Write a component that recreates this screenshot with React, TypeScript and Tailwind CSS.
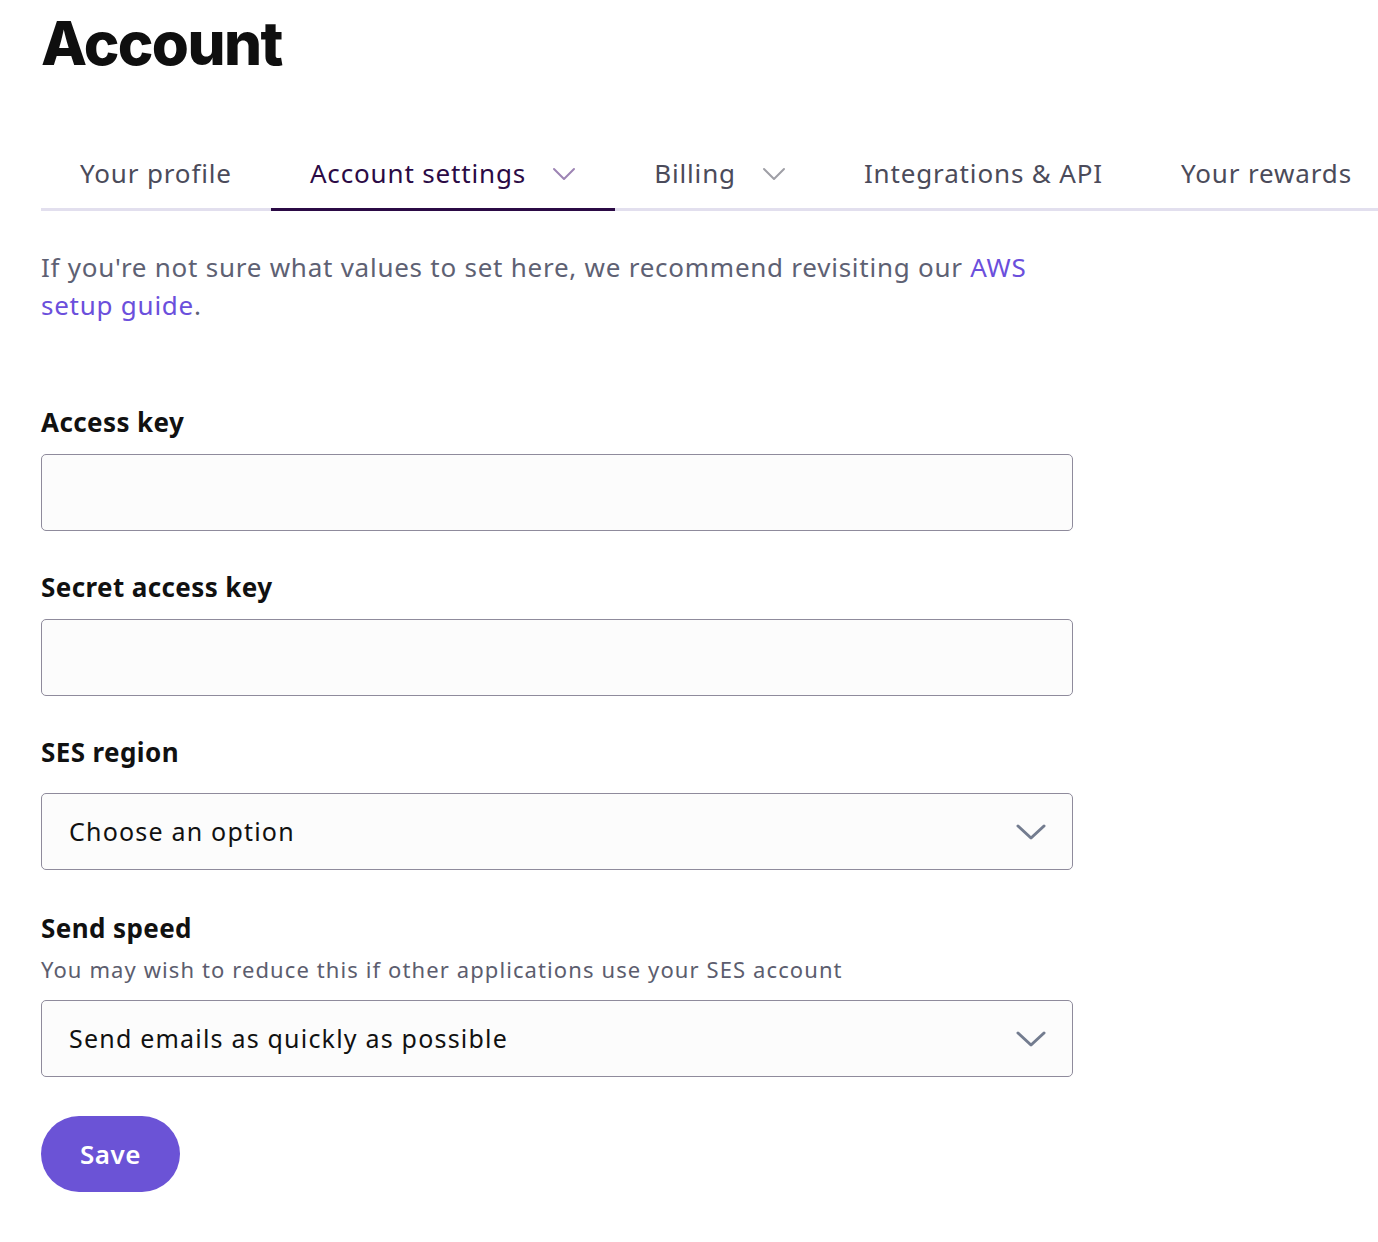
import React from "react";

const font = { fontFamily: '"Noto Sans", "Open Sans", sans-serif' };

function TabChevron({ className }: { className?: string }) {
  return (
    <svg viewBox="0 0 24 14" className={className} fill="none" stroke="currentColor" strokeWidth={2} strokeLinecap="round" strokeLinejoin="round">
      <path d="M2 2l10 10 10-10" />
    </svg>
  );
}

function SelectChevron({ className }: { className?: string }) {
  return (
    <svg viewBox="0 0 30 16" className={className} fill="none" stroke="currentColor" strokeWidth={3} strokeLinecap="round" strokeLinejoin="round">
      <path d="M2 2l13 12 13-12" />
    </svg>
  );
}

function Tab({ label, active, chevron, chevronClass }: { label: string; active?: boolean; chevron?: boolean; chevronClass?: string }) {
  return (
    <div
      className={`flex items-center px-[39px] h-[72px] -mb-[3px] border-b-[3px] ${active ? "border-[#2b0a45] text-[#2b0a45]" : "border-transparent text-[#4b4b5a]"}`}
    >
      <span className="text-[26px] tracking-[0.85px] whitespace-nowrap">{label}</span>
      {chevron && <TabChevron className={`w-[24px] h-[14px] ml-[26px] ${chevronClass}`} />}
    </div>
  );
}

function Field({ label, select, value, desc, extraTop }: { label: string; select?: boolean; value?: string; desc?: string; extraTop?: boolean }) {
  return (
    <div className={`flex flex-col ${extraTop ? "mt-[2px]" : ""}`}>
      <div className="text-[26px] font-bold text-[#111] leading-[34px] tracking-[0.4px]">{label}</div>
      {desc && <div className="text-[22px] text-[#5c5d6e] leading-[30px] mt-[9px] tracking-[1.1px]">{desc}</div>}
      <div className={`${desc ? "mt-[16px]" : select ? "mt-[24px]" : "mt-[15px]"} h-[77px] w-[1032px] border border-[#8f8b9c] rounded-[5px] bg-[#fcfcfc] flex items-center justify-between pl-[27px] pr-[26px]`}>
        {select && <span className="text-[25px] text-[#111] tracking-[1.2px]">{value}</span>}
        {select && <SelectChevron className="w-[30px] h-[16px] text-[#737c8f]" />}
      </div>
    </div>
  );
}

export default function App() {
  return (
    <div className="bg-white min-h-[1242px] pl-[41px]" style={font}>
      <h1 className="text-[60px] font-extrabold text-[#0f0f0f] leading-none pt-[13px] tracking-[-1.6px]" style={{ fontFamily: 'Inter, "Noto Sans", sans-serif' }}>
        Account
      </h1>
      <div className="mt-[66px] flex border-b-[3px] border-[#e2dfee]">
        <Tab label="Your profile" />
        <Tab label="Account settings" active chevron chevronClass="text-[#9d84b4]" />
        <Tab label="Billing" chevron chevronClass="text-[#9f9fa6]" />
        <Tab label="Integrations & API" />
        <Tab label="Your rewards" />
      </div>
      <p className="mt-[37px] w-[1045px] text-[26px] leading-[38px] text-[#5e6173] tracking-[0.75px]">
        If you're not sure what values to set here, we recommend revisiting our <span className="text-[#6b4fdc]">AWS setup guide</span>.
      </p>
      <div className="mt-[81px] flex flex-col gap-[39px]">
        <Field label="Access key" />
        <Field label="Secret access key" />
        <Field label="SES region" select value="Choose an option" />
        <Field label="Send speed" select value="Send emails as quickly as possible" desc="You may wish to reduce this if other applications use your SES account" extraTop />
      </div>
      <button className="mt-[39px] w-[139px] h-[76px] rounded-full bg-[#6b53d6] text-white text-[26px] font-semibold tracking-[0.5px]">
        Save
      </button>
    </div>
  );
}
